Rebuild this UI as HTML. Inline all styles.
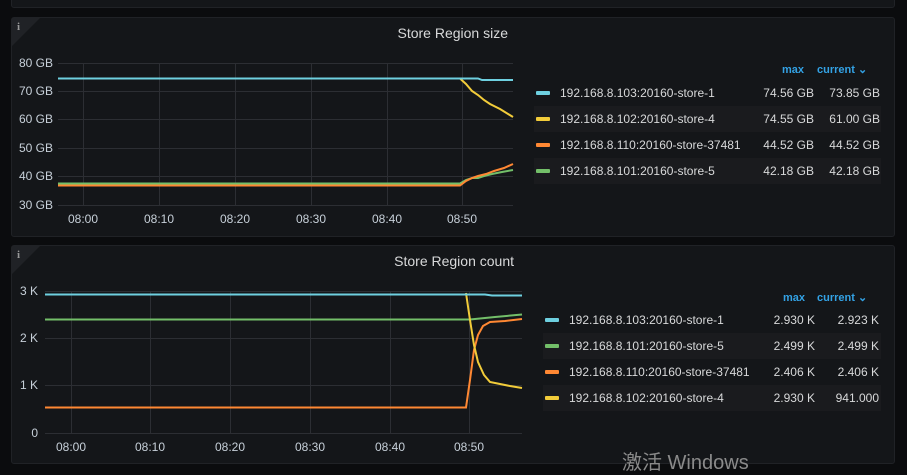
<!DOCTYPE html>
<html><head><meta charset="utf-8"><style>
*{margin:0;padding:0;box-sizing:border-box}
body{width:907px;height:474px;background:#0b0c0e;position:relative;overflow:hidden;font-family:"Liberation Sans","Noto Sans CJK SC",sans-serif;color:#d8d9da}
.panel{position:absolute;background:#141619;border:1px solid #202226;border-radius:3px}
.corner{position:absolute;left:0;top:0;width:0;height:0;border-top:28px solid #202226;border-right:28px solid transparent}
.ci{position:absolute;left:5px;top:3px;font-size:11px;color:#999;font-weight:bold;font-family:"Liberation Serif",serif}
.title{position:absolute;font-size:14px;color:#d8d9da}
.row{position:absolute;height:26px;font-size:12px;color:#d8d9da}
.row.alt{background:#1a1b1e}
.sw{position:absolute;left:2px;top:11px;width:14px;height:4px;border-radius:1px}
.nm{position:absolute;top:6px}
.mx,.cu{position:absolute;top:6px;text-align:right;width:70px}
.hd{position:absolute;font-size:11px;color:#33a2e5;font-weight:bold}
</style></head><body>
<div class="panel" style="left:11px;top:-4px;width:884px;height:12px"></div>
<div class="panel" style="left:11px;top:17px;width:884px;height:220px">
 <div class="corner"></div><div class="ci">i</div>
 <div class="title" style="right:386px;top:7px">Store Region size</div>
</div>
<div class="panel" style="left:11px;top:245px;width:884px;height:219px">
 <div class="corner"></div><div class="ci">i</div>
 <div class="title" style="right:380px;top:7px">Store Region count</div>
</div>
<svg style="position:absolute;left:0;top:0" width="907" height="474">
<g stroke="#2c2e33" stroke-width="1">
<line x1="58" y1="63.5" x2="513" y2="63.5"/><line x1="58" y1="91.5" x2="513" y2="91.5"/><line x1="58" y1="119.5" x2="513" y2="119.5"/><line x1="58" y1="148.5" x2="513" y2="148.5"/><line x1="58" y1="176.5" x2="513" y2="176.5"/><line x1="58" y1="205.5" x2="513" y2="205.5"/>
<line x1="83.5" y1="63" x2="83.5" y2="205"/><line x1="159.5" y1="63" x2="159.5" y2="205"/><line x1="235.5" y1="63" x2="235.5" y2="205"/><line x1="311.5" y1="63" x2="311.5" y2="205"/><line x1="387.5" y1="63" x2="387.5" y2="205"/><line x1="462.5" y1="63" x2="462.5" y2="205"/>
<line x1="45" y1="291.5" x2="522" y2="291.5"/><line x1="45" y1="338.5" x2="522" y2="338.5"/><line x1="45" y1="385.5" x2="522" y2="385.5"/><line x1="45" y1="433.5" x2="522" y2="433.5"/>
<line x1="71.5" y1="291" x2="71.5" y2="433"/><line x1="150.5" y1="291" x2="150.5" y2="433"/><line x1="230.5" y1="291" x2="230.5" y2="433"/><line x1="310.5" y1="291" x2="310.5" y2="433"/><line x1="390.5" y1="291" x2="390.5" y2="433"/><line x1="469.5" y1="291" x2="469.5" y2="433"/>
</g>
<g fill="none" stroke-width="2">
<polyline stroke="#f2cc3a" points="58,78.5 460,78.5 466,84 472,91 478,95 484,100 490,104 500,109 513,117"/>
<polyline stroke="#73bf69" points="58,183.5 460,183.5 466,180 472,178 478,178 484,176 492,174 502,172 513,170"/>
<polyline stroke="#ff8833" points="58,185.5 460,185.5 466,181 472,178 478,176 486,174 494,171 504,168 513,164"/>
<polyline stroke="#6ed0e0" points="58,78.5 478,78.5 482,80 513,80"/>
<polyline stroke="#73bf69" points="45,319.5 470,319.5 495,317 522,314.5"/>
<polyline stroke="#ff8833" points="45,407.5 466,407.5 470,380 474,350 478,335 483,326 490,322 505,321 522,319"/>
<polyline stroke="#f2cc3a" points="466,293 470,320 474,345 478,362 484,375 490,382 500,384 510,386 522,388"/>
<polyline stroke="#6ed0e0" points="45,294.5 485,294.5 492,295.5 522,295.5"/>
</g>
<g font-family="Liberation Sans" font-size="12" fill="#c7d0d9">
<g text-anchor="end"><text x="53" y="67">80 GB</text><text x="53" y="95">70 GB</text><text x="53" y="123">60 GB</text><text x="53" y="152">50 GB</text><text x="53" y="180">40 GB</text><text x="53" y="209">30 GB</text>
<text x="38" y="295">3 K</text><text x="38" y="342">2 K</text><text x="38" y="389">1 K</text><text x="38" y="437">0</text></g>
<g text-anchor="middle"><text x="83" y="223">08:00</text><text x="159" y="223">08:10</text><text x="235" y="223">08:20</text><text x="311" y="223">08:30</text><text x="387" y="223">08:40</text><text x="462" y="223">08:50</text>
<text x="71" y="451">08:00</text><text x="150" y="451">08:10</text><text x="230" y="451">08:20</text><text x="310" y="451">08:30</text><text x="390" y="451">08:40</text><text x="469" y="451">08:50</text></g>
</g>
</svg>
<div class="hd" style="left:782px;top:64px">max</div><div class="hd" style="left:817px;top:63px">current ⌄</div>
<div class="row" style="left:534px;top:80px;width:347px"><div class="sw" style="background:#6ed0e0"></div><div class="nm" style="left:26px">192.168.8.103:20160-store-1</div><div class="mx" style="left:210px">74.56 GB</div><div class="cu" style="left:276px">73.85 GB</div></div>
<div class="row alt" style="left:534px;top:106px;width:347px"><div class="sw" style="background:#f2cc3a"></div><div class="nm" style="left:26px">192.168.8.102:20160-store-4</div><div class="mx" style="left:210px">74.55 GB</div><div class="cu" style="left:276px">61.00 GB</div></div>
<div class="row" style="left:534px;top:132px;width:347px"><div class="sw" style="background:#ff8833"></div><div class="nm" style="left:26px">192.168.8.110:20160-store-37481</div><div class="mx" style="left:210px">44.52 GB</div><div class="cu" style="left:276px">44.52 GB</div></div>
<div class="row alt" style="left:534px;top:158px;width:347px"><div class="sw" style="background:#73bf69"></div><div class="nm" style="left:26px">192.168.8.101:20160-store-5</div><div class="mx" style="left:210px">42.18 GB</div><div class="cu" style="left:276px">42.18 GB</div></div>
<div class="hd" style="left:783px;top:292px">max</div><div class="hd" style="left:817px;top:291px">current ⌄</div>
<div class="row" style="left:543px;top:307px;width:338px"><div class="sw" style="background:#6ed0e0"></div><div class="nm" style="left:26px">192.168.8.103:20160-store-1</div><div class="mx" style="left:202px">2.930 K</div><div class="cu" style="left:266px">2.923 K</div></div>
<div class="row alt" style="left:543px;top:333px;width:338px"><div class="sw" style="background:#73bf69"></div><div class="nm" style="left:26px">192.168.8.101:20160-store-5</div><div class="mx" style="left:202px">2.499 K</div><div class="cu" style="left:266px">2.499 K</div></div>
<div class="row" style="left:543px;top:359px;width:338px"><div class="sw" style="background:#ff8833"></div><div class="nm" style="left:26px">192.168.8.110:20160-store-37481</div><div class="mx" style="left:202px">2.406 K</div><div class="cu" style="left:266px">2.406 K</div></div>
<div class="row alt" style="left:543px;top:385px;width:338px"><div class="sw" style="background:#f2cc3a"></div><div class="nm" style="left:26px">192.168.8.102:20160-store-4</div><div class="mx" style="left:202px">2.930 K</div><div class="cu" style="left:266px">941.000</div></div>
<div style="position:absolute;left:622px;top:446px;font-size:20px;color:#8a8a8a">激活 Windows</div>
</body></html>
